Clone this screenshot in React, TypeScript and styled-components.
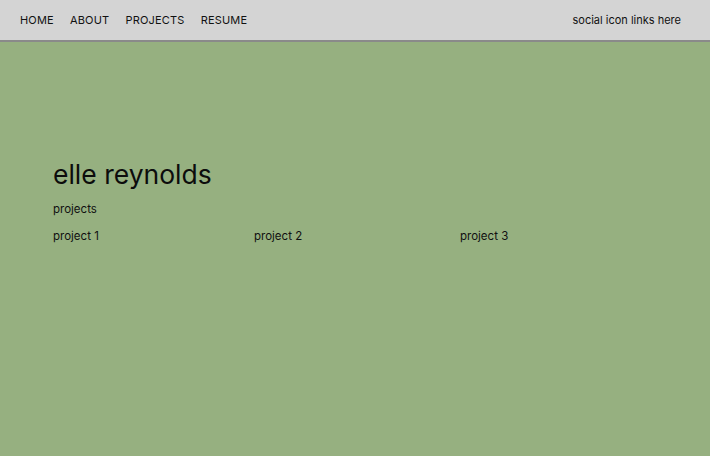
import React from 'react';
import styled, { createGlobalStyle } from 'styled-components';

const GlobalStyle = createGlobalStyle`
  html, body {
    margin: 0;
    padding: 0;
    height: 100%;
    background: #96b080;
    font-family: Inter, 'Noto Sans', sans-serif;
    color: #111;
  }
  #root {
    min-height: 100vh;
    display: flex;
    flex-direction: column;
  }
`;

const NavBar = styled.header`
  display: flex;
  align-items: center;
  justify-content: space-between;
  height: 40px;
  padding: 0 29px 0 20px;
  background-color: #d4d4d4;
  border-bottom: 2px solid #8a8a8a;
  font-size: 11px;
`;

const NavLinks = styled.nav`
  display: flex;
  align-items: center;
  gap: 16px;
`;

const NavLink = styled.a`
  color: #111;
  text-decoration: none;
  letter-spacing: 0.2px;
`;

const Social = styled.div`
  color: #111;
`;

const Main = styled.main`
  flex: 1;
  padding: 116px 53px 0;
`;

const Title = styled.h1`
  margin: 0;
  font-size: 26.5px;
  font-weight: 400;
  line-height: 32px;
  color: #0c0c0c;
`;

const SectionLabel = styled.div`
  margin-top: 11px;
  font-size: 11.5px;
  line-height: 16px;
`;

const ProjectGrid = styled.div`
  display: grid;
  grid-template-columns: 201px 206px 1fr;
  margin-top: 11px;
  font-size: 11.5px;
  line-height: 16px;
`;

const Project = styled.div``;

const links = ['HOME', 'ABOUT', 'PROJECTS', 'RESUME'];
const projects = ['project 1', 'project 2', 'project 3'];

export default function App() {
  return (
    <>
      <GlobalStyle />
      <NavBar>
        <NavLinks>
          {links.map((l) => (
            <NavLink key={l} href="#">
              {l}
            </NavLink>
          ))}
        </NavLinks>
        <Social>social icon links here</Social>
      </NavBar>
      <Main>
        <Title>elle reynolds</Title>
        <SectionLabel>projects</SectionLabel>
        <ProjectGrid>
          {projects.map((p) => (
            <Project key={p}>{p}</Project>
          ))}
        </ProjectGrid>
      </Main>
    </>
  );
}
